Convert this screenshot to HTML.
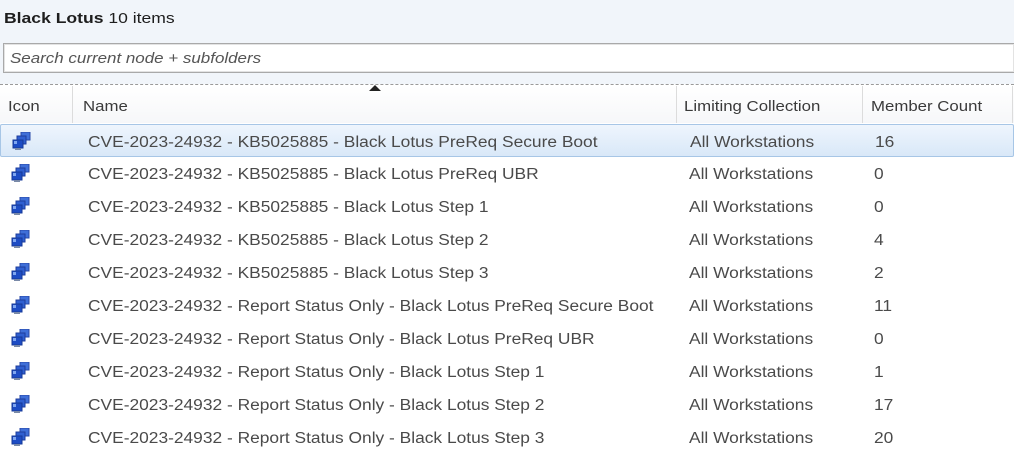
<!DOCTYPE html>
<html><head><meta charset="utf-8"><style>
*{margin:0;padding:0;box-sizing:border-box}
body{width:1014px;height:468px;overflow:hidden;background:#fff;font-family:"Liberation Sans",sans-serif;color:#3c3c3c;position:relative}
.top{position:absolute;left:0;top:0;width:1014px;height:84px;background:#f1f5fa}
.title{position:absolute;left:4px;top:10px;font-size:15px;color:#1e1e1e;transform-origin:left;transform:scaleX(1.17);white-space:nowrap}
.search{position:absolute;left:3px;top:43px;width:1012px;height:30px;border:1px solid #a9a9a9;background:#fff;box-shadow:inset 0 0 0 1px #e3e3e3}
.search span{position:absolute;left:6px;top:6px;font-size:15px;font-style:italic;color:#555;transform-origin:left;transform:scaleX(1.13);white-space:nowrap}
.dash{position:absolute;left:0;top:84px;width:1014px;border-top:1px dashed #9a9a9a}
.hdr{position:absolute;left:0;top:86px;width:1014px;height:37px;background:linear-gradient(#fff,#f6f7f9)}
.hdr div{position:absolute;top:12px;font-size:15px;color:#3a3a3a;transform-origin:left;transform:scaleX(1.12);white-space:nowrap}
.sep{position:absolute;top:86px;width:1px;height:37px;background:#dcdcdc}
.arrow{position:absolute;left:369px;top:85px;width:0;height:0;border-left:6px solid transparent;border-right:6px solid transparent;border-bottom:6px solid #222}
.row{position:absolute;left:0;width:1014px;height:33px;color:#4a4a4a}
.row.sel{background:linear-gradient(#eef5fd,#d9e8f8);border:1px solid #a7c6e6;border-radius:2px}
.row span{position:absolute;top:9px;white-space:nowrap;font-size:15.5px;transform-origin:left;transform:scaleX(1.12)}
.row svg{position:absolute;left:11px;top:7px}
</style></head><body>
<div class="top"></div>
<div class="title"><b>Black Lotus</b> 10 items</div>
<div class="search"><span>Search current node + subfolders</span></div>
<div class="hdr">
<div style="left:8px">Icon</div>
<div style="left:83px">Name</div>
<div style="left:684px">Limiting Collection</div>
<div style="left:871px">Member Count</div>
</div>
<div class="dash"></div>
<div class="arrow"></div>
<div class="sep" style="left:72px"></div>
<div class="sep" style="left:676px"></div>
<div class="sep" style="left:862px"></div>
<div class="sep" style="left:1012px"></div>

<svg width="0" height="0" style="position:absolute"><defs>
<g id="ic">
<rect x="9" y="0" width="9" height="8" fill="#3f6fd8" stroke="#2a4aa8" stroke-width="1"/>
<rect x="5" y="4" width="9" height="8" fill="#2f5fd0" stroke="#1e3c9c" stroke-width="1"/>
<rect x="1" y="8" width="10" height="8" fill="#1d4cc4" stroke="#163a98" stroke-width="1"/>
<rect x="3" y="16" width="6" height="2" fill="#7a8aa8"/>
<rect x="2" y="9" width="3" height="3" fill="#7fa6f0"/>
</g></defs></svg>

<div class="row sel" style="top:124px"><svg width="20" height="20"><use href="#ic"/></svg><span style="left:87px">CVE-2023-24932 - KB5025885 - Black Lotus PreReq Secure Boot</span><span style="left:689px">All Workstations</span><span style="left:874px">16</span></div>
<div class="row" style="top:157px"><svg width="20" height="20"><use href="#ic"/></svg><span style="left:88px">CVE-2023-24932 - KB5025885 - Black Lotus PreReq UBR</span><span style="left:689px">All Workstations</span><span style="left:874px">0</span></div>
<div class="row" style="top:190px"><svg width="20" height="20"><use href="#ic"/></svg><span style="left:88px">CVE-2023-24932 - KB5025885 - Black Lotus Step 1</span><span style="left:689px">All Workstations</span><span style="left:874px">0</span></div>
<div class="row" style="top:223px"><svg width="20" height="20"><use href="#ic"/></svg><span style="left:88px">CVE-2023-24932 - KB5025885 - Black Lotus Step 2</span><span style="left:689px">All Workstations</span><span style="left:874px">4</span></div>
<div class="row" style="top:256px"><svg width="20" height="20"><use href="#ic"/></svg><span style="left:88px">CVE-2023-24932 - KB5025885 - Black Lotus Step 3</span><span style="left:689px">All Workstations</span><span style="left:874px">2</span></div>
<div class="row" style="top:289px"><svg width="20" height="20"><use href="#ic"/></svg><span style="left:88px">CVE-2023-24932 - Report Status Only - Black Lotus PreReq Secure Boot</span><span style="left:689px">All Workstations</span><span style="left:874px">11</span></div>
<div class="row" style="top:322px"><svg width="20" height="20"><use href="#ic"/></svg><span style="left:88px">CVE-2023-24932 - Report Status Only - Black Lotus PreReq UBR</span><span style="left:689px">All Workstations</span><span style="left:874px">0</span></div>
<div class="row" style="top:355px"><svg width="20" height="20"><use href="#ic"/></svg><span style="left:88px">CVE-2023-24932 - Report Status Only - Black Lotus Step 1</span><span style="left:689px">All Workstations</span><span style="left:874px">1</span></div>
<div class="row" style="top:388px"><svg width="20" height="20"><use href="#ic"/></svg><span style="left:88px">CVE-2023-24932 - Report Status Only - Black Lotus Step 2</span><span style="left:689px">All Workstations</span><span style="left:874px">17</span></div>
<div class="row" style="top:421px"><svg width="20" height="20"><use href="#ic"/></svg><span style="left:88px">CVE-2023-24932 - Report Status Only - Black Lotus Step 3</span><span style="left:689px">All Workstations</span><span style="left:874px">20</span></div>
</body></html>
